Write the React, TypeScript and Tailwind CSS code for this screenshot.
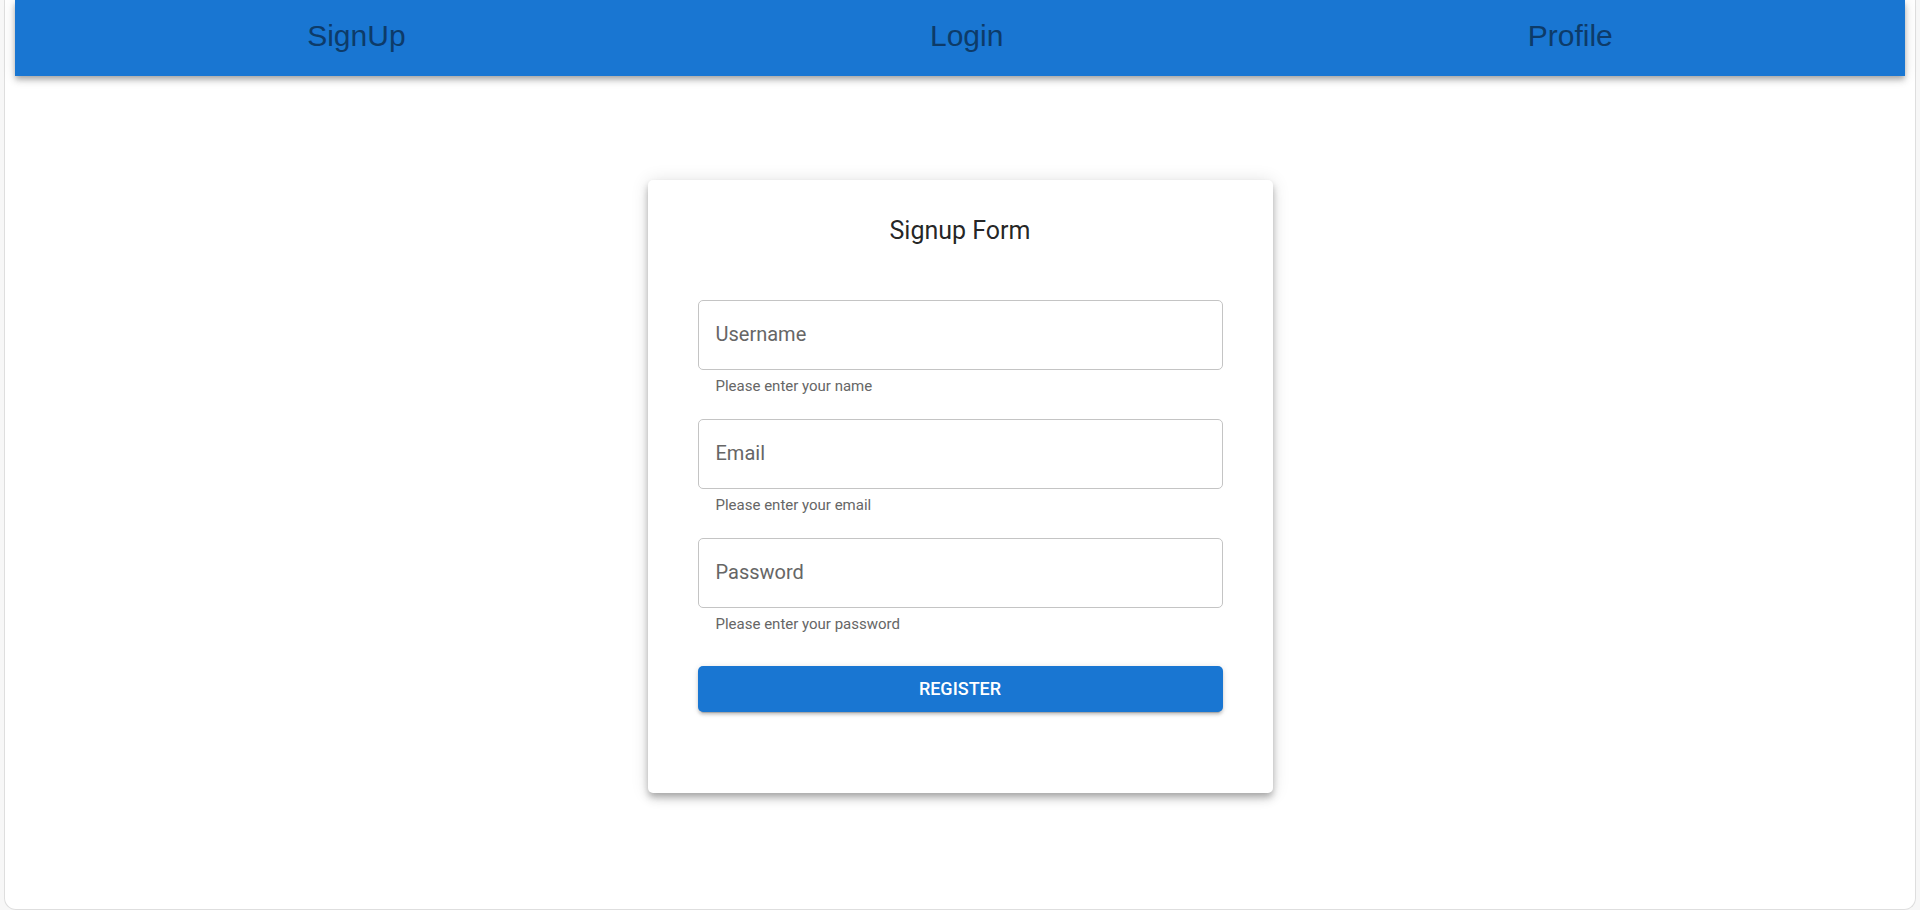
import React from "react";

const links = [
  { label: "SignUp", href: "#signup" },
  { label: "Login", href: "#login" },
  { label: "Profile", href: "#profile" },
];

const fields = [
  { id: "username", label: "Username", type: "text", help: "Please enter your name" },
  { id: "email", label: "Email", type: "email", help: "Please enter your email" },
  { id: "password", label: "Password", type: "password", help: "Please enter your password" },
];

type FieldProps = { id: string; label: string; type: string; help: string };

function Field({ id, label, type, help }: FieldProps) {
  return (
    <div>
      <div className="grid items-center">
        <input
          id={id}
          name={id}
          type={type}
          placeholder=" "
          aria-describedby={`${id}-help`}
          className="peer col-start-1 row-start-1 h-[70px] w-full rounded-[5px] border border-[#c4c4c4] bg-transparent px-[18px] text-xl text-black/87 outline-none focus:border-[#1976d2]"
        />
        <label
          htmlFor={id}
          className="pointer-events-none col-start-1 row-start-1 mx-3 mb-0.5 justify-self-start bg-white px-1.5 text-xl leading-7 text-[#666666] peer-focus:-translate-y-8 peer-focus:text-sm peer-focus:text-[#1976d2] peer-not-placeholder-shown:-translate-y-8 peer-not-placeholder-shown:text-sm"
        >
          {label}
        </label>
      </div>
      <p id={`${id}-help`} className="mt-1 px-[18px] text-[15px] leading-[25px] text-[#666666]">
        {help}
      </p>
    </div>
  );
}

export default function App() {
  return (
    <div className="bg-[#f7f7f7] px-1 font-[Roboto,sans-serif]">
      <div className="min-h-screen rounded-b-xl border-x border-b border-[#dedede] bg-white px-2.5 pb-10">
        <header className="bg-[#1976d2] px-[30px] shadow-[0_3px_5px_-1px_rgba(0,0,0,0.2),0_5px_6px_0_rgba(0,0,0,0.14),0_1px_13px_0_rgba(0,0,0,0.12)]">
          <nav className="flex h-[76px] items-center justify-around pb-1">
            {links.map((link) => (
              <a
                key={link.label}
                href={link.href}
                className="font-['Liberation_Sans',Arial,sans-serif] text-3xl text-[#0d3b69]"
              >
                {link.label}
              </a>
            ))}
          </nav>
        </header>
        <main className="mt-[104px] flex justify-center">
          <form
            onSubmit={(event) => event.preventDefault()}
            className="w-full max-w-[625px] rounded-[5px] bg-white px-[50px] pt-[31px] pb-[81px] shadow-[0_4px_6px_-1px_rgba(0,0,0,0.2),0_6px_10px_0_rgba(0,0,0,0.14),0_1px_18px_0_rgba(0,0,0,0.12)]"
          >
            <h1 className="text-center text-[25px] leading-10 text-black/87">Signup Form</h1>
            <div className="mt-[49px] flex flex-col gap-5">
              {fields.map((field) => (
                <Field key={field.id} {...field} />
              ))}
            </div>
            <button
              type="submit"
              className="mt-[29px] h-[46px] w-full rounded-[5px] bg-[#1976d2] text-lg font-medium text-white uppercase shadow-[0_4px_1px_-3px_rgba(0,0,0,0.2),0_3px_3px_0_rgba(0,0,0,0.14),0_1px_6px_0_rgba(0,0,0,0.12)]"
            >
              Register
            </button>
          </form>
        </main>
      </div>
    </div>
  );
}
